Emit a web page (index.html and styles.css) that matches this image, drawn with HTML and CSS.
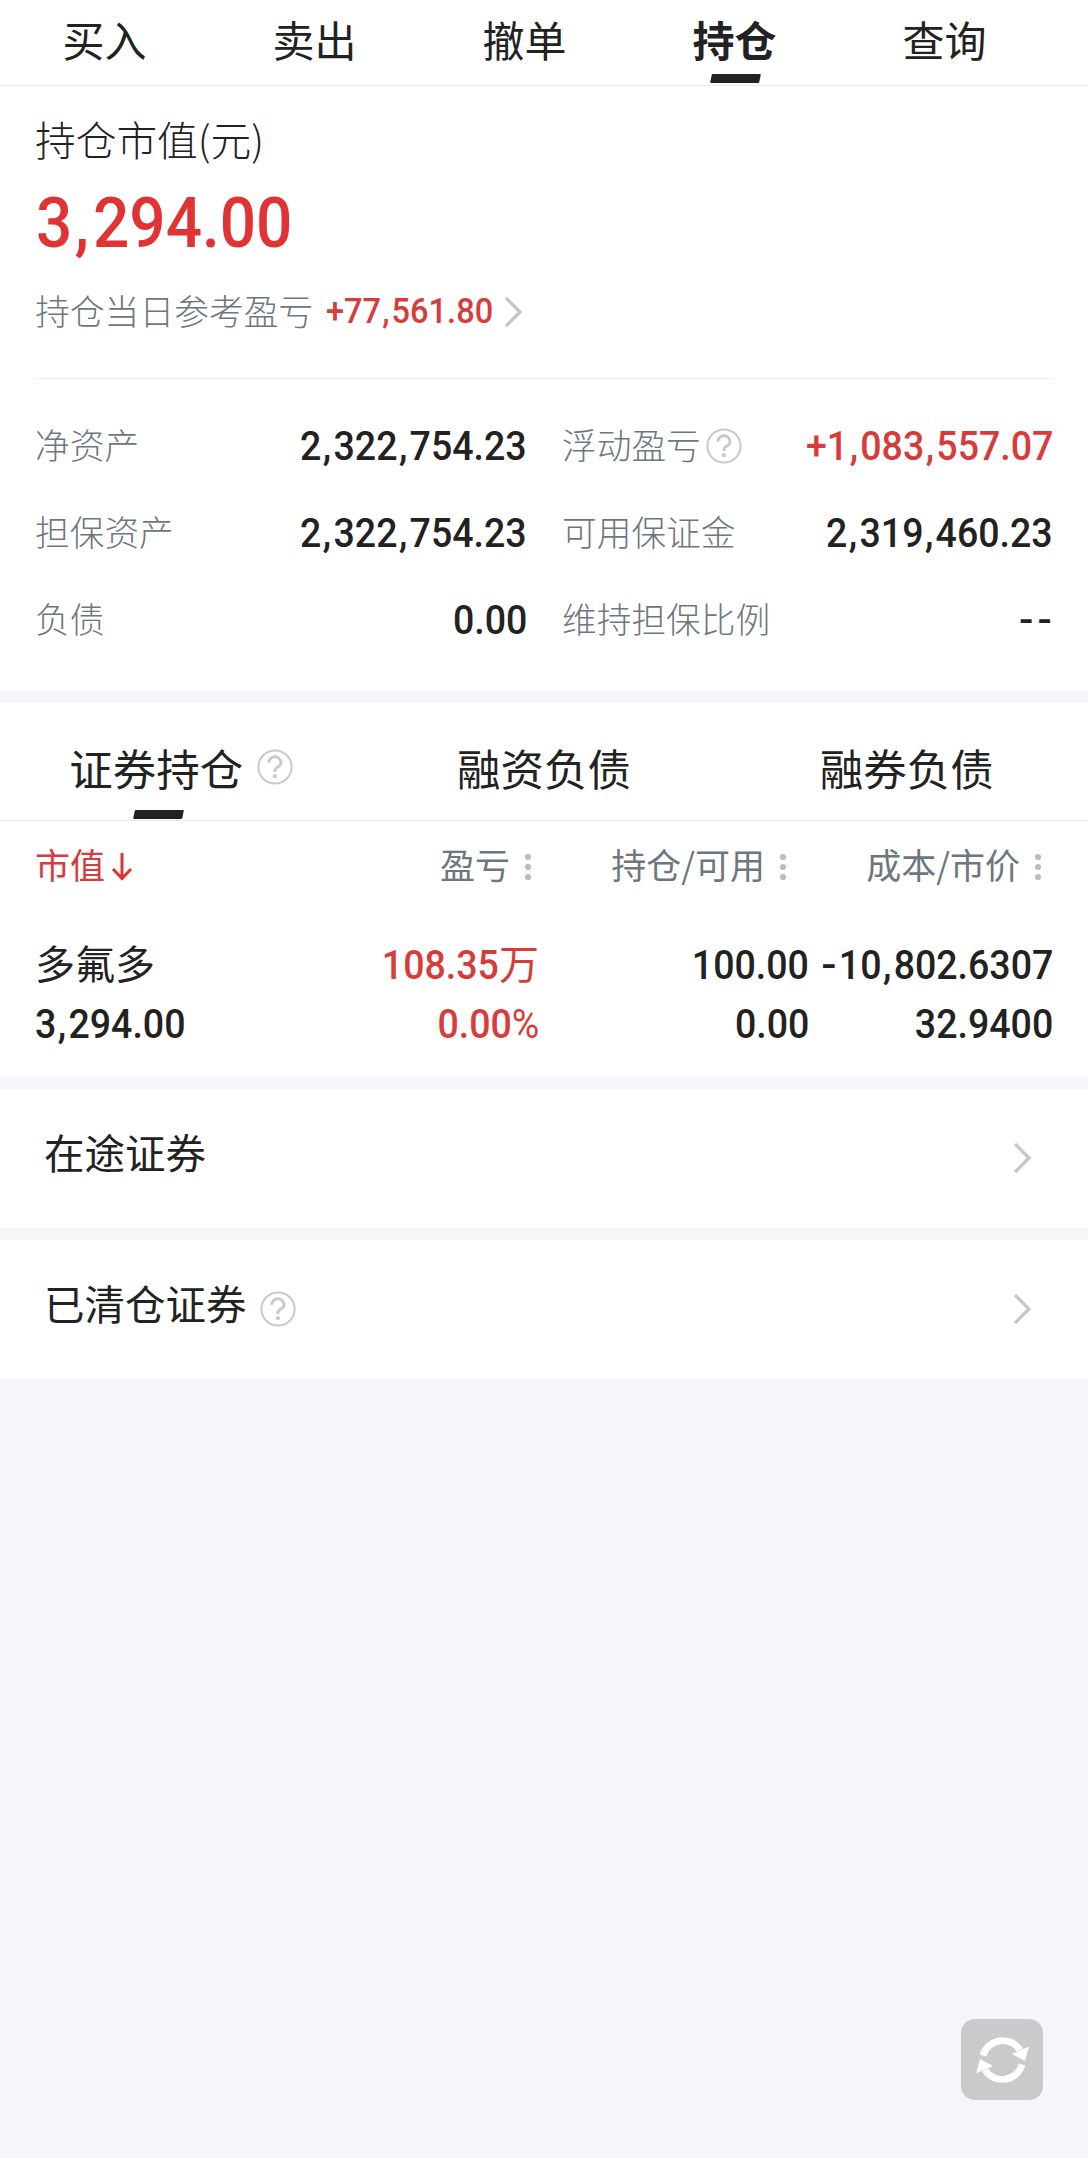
FILE: index.html
```html
<!DOCTYPE html>
<html lang="zh-CN">
<head>
    <meta charset="UTF-8">
    <title>持仓</title>
    <meta name="viewport" content="width=device-width, initial-scale=1.0">
    <link rel="stylesheet" href="styles.css">
</head>
<body>
    <svg class="sprite">
        <symbol id="help" viewBox="0 0 36 36">
            <circle cx="18" cy="18" r="16.6" fill="none" stroke="#c6cacf" stroke-width="2"/>
            <path d="M11.800 13.800a6.100 6.100 0 0 1 12.200 0c0 3-2.300 3.800-4.200 4.900-1.500.9-1.900 1.800-1.900 4.300" fill="none" stroke="#c6cacf" stroke-width="2.9"/>
            <circle cx="17.9" cy="27.200" r="2.100" fill="#c6cacf"/>
        </symbol>
        <symbol id="chevron" viewBox="0 0 20 32">
            <path d="M2 2l14 14L2 30" fill="none" stroke="#c3c7cc" stroke-width="3.200"/>
        </symbol>
        <symbol id="dots" viewBox="0 0 8 28">
            <circle cx="4" cy="4" r="3.1" fill="#b9bec3"/>
            <circle cx="4" cy="14" r="3.1" fill="#b9bec3"/>
            <circle cx="4" cy="24" r="3.1" fill="#b9bec3"/>
        </symbol>
    </svg>

    <nav class="tabs">
        <a class="tab">买入</a>
        <a class="tab">卖出</a>
        <a class="tab">撤单</a>
        <a class="tab active">持仓</a>
        <a class="tab">查询</a>
    </nav>

    <section class="resumo">
        <div class="titulo">持仓市值(元)</div>
        <div class="valor"><span class="num left">3<i>,</i>294.00</span></div>
        <div class="dia">
            <span>持仓当日参考盈亏</span>
            <span class="num left red">+77<i>,</i>561.80</span>
            <svg class="seta"><use href="#chevron"/></svg>
        </div>
        <div class="dados">
            <div class="dado"><span>净资产</span><span class="num">2<i>,</i>322<i>,</i>754.23</span></div>
            <div class="dado"><span>浮动盈亏</span><svg class="help"><use href="#help"/></svg><span class="num red">+1<i>,</i>083<i>,</i>557.07</span></div>
            <div class="dado"><span>担保资产</span><span class="num">2<i>,</i>322<i>,</i>754.23</span></div>
            <div class="dado"><span>可用保证金</span><span class="num">2<i>,</i>319<i>,</i>460.23</span></div>
            <div class="dado"><span>负债</span><span class="num">0.00</span></div>
            <div class="dado"><span>维持担保比例</span><span class="num traco">--</span></div>
        </div>
    </section>

    <section class="posicao">
        <div class="subtabs">
            <a class="subtab"><span class="active">证券持仓</span><svg class="help"><use href="#help"/></svg></a>
            <a class="subtab">融资负债</a>
            <a class="subtab">融券负债</a>
        </div>
        <div class="linha cabecalho">
            <div class="c1 red">市值<svg class="down" viewBox="0 0 22 30"><path d="M11 1v25M2 17l9 9.500 9-9.500" fill="none" stroke="#e03434" stroke-width="3"/></svg></div>
            <div class="c2">盈亏<svg class="dots"><use href="#dots"/></svg></div>
            <div class="c3">持仓/可用<svg class="dots"><use href="#dots"/></svg></div>
            <div class="c4">成本/市价<svg class="dots"><use href="#dots"/></svg></div>
        </div>
        <div class="linha">
            <div class="c1 nome">多氟多</div>
            <div class="c2 red"><span class="num">108.35</span>万</div>
            <div class="c3"><span class="num">100.00</span></div>
            <div class="c4"><span class="num"><span class="menos">-</span>10<i>,</i>802.6307</span></div>
        </div>
        <div class="linha">
            <div class="c1"><span class="num left">3<i>,</i>294.00</span></div>
            <div class="c2 red"><span class="num">0.00<span class="pct">%</span></span></div>
            <div class="c3"><span class="num">0.00</span></div>
            <div class="c4"><span class="num">32.9400</span></div>
        </div>
    </section>

    <a class="item">
        <span>在途证券</span>
        <svg class="seta"><use href="#chevron"/></svg>
    </a>
    <a class="item">
        <span>已清仓证券</span>
        <svg class="help"><use href="#help"/></svg>
        <svg class="seta"><use href="#chevron"/></svg>
    </a>

    <button class="atualizar">
        <svg viewBox="0 0 82 82">
            <g id="arco">
                <path d="M22 36.500A20.500 20.500 0 0 1 59 31" fill="none" stroke="#fff" stroke-width="6.800"/>
                <path d="M51 35l17-7.500-4 14.500z" fill="#fff"/>
            </g>
            <use href="#arco" transform="rotate(180 41.500 41)"/>
        </svg>
    </button>
</body>
</html>
```
FILE: styles.css
```css
* {
    box-sizing: border-box;
}

body {
    margin: 0;
    min-height: 2158px;
    background-color: #f4f6fa;
    color: #222;
    font-family: "Noto Sans CJK SC", sans-serif;
}

.sprite {
    display: none;
}

.red {
    color: #d63c3a;
}

.num {
    display: inline-block;
    font-family: Roboto, sans-serif;
    font-weight: 500;
    font-size: 41px;
    font-kerning: none;
    transform: scaleX(0.915);
    transform-origin: right center;
}

.num.left {
    transform-origin: left center;
}

.num i {
    margin: 0 0.06em 0 0.04em;
    font-style: normal;
}

.menos {
    display: inline-block;
    margin-right: 4px;
    transform: scaleX(1.2);
}

.tabs {
    display: flex;
    height: 86px;
    background-color: #fff;
    border-bottom: 1px solid #ebecec;
}

.tab {
    position: relative;
    width: 210px;
    padding-right: 1px;
    text-align: center;
    font-size: 42px;
    line-height: 77px;
}

.tab.active {
    font-weight: bold;
}

.active::after {
    content: "";
    position: absolute;
    left: 50%;
    top: 74px;
    width: 49px;
    height: 9px;
    margin-left: -24px;
    background-color: #222;
    border-radius: 1px;
    transform: skewX(-12deg);
}

.resumo {
    height: 605px;
    padding: 28px 35px 0;
    background-color: #fff;
}

.titulo {
    height: 52px;
    font-size: 40.7px;
    font-weight: 300;
    line-height: 50px;
}

.valor {
    height: 114px;
    color: #e03434;
    line-height: 114px;
}

.valor .num {
    margin-left: 1px;
    font-size: 71px;
    transform: scaleX(0.9);
}

.dia {
    display: flex;
    align-items: center;
    height: 63px;
    color: #6d7780;
    font-size: 34.8px;
    font-weight: 300;
    line-height: 52px;
}

.dia .num {
    margin-left: 13px;
    padding-top: 1px;
    font-size: 35px;
    transform: scaleX(0.93);
}

.dia .seta {
    margin-left: -2px;
}

.dia span:first-child,
.dado span:first-child {
    padding-bottom: 3px;
}

.seta {
    width: 20px;
    height: 32px;
}

.dados {
    display: grid;
    grid-template-columns: 492px 491px;
    column-gap: 35px;
    margin-top: 35px;
    padding-top: 23px;
    border-top: 1px solid #ebeeee;
}

.dado {
    display: flex;
    align-items: center;
    height: 87px;
    color: #6d7780;
    font-size: 34.7px;
    font-weight: 300;
}

.dado .num {
    margin-left: auto;
    color: #222;
}

.dado .num.red {
    color: #d63c3a;
}

.dado .traco {
    letter-spacing: 4px;
    margin-right: -3px;
    transform: scaleX(1.03);
}

.help {
    width: 36px;
    height: 36px;
}

.dado .help {
    margin-left: 5px;
}

.posicao {
    height: 374px;
    margin-top: 12px;
    background-color: #fff;
}

.subtabs {
    display: flex;
    height: 118px;
    border-bottom: 1px solid #e8ebeb;
}

.subtab {
    display: flex;
    flex: 1;
    align-items: center;
    justify-content: center;
    padding-top: 11px;
    font-size: 43.5px;
}

.subtab .active {
    position: relative;
}

.subtab .active::after {
    margin-left: -22px;
}

.subtab .help {
    margin-left: 14px;
}

.linha {
    display: flex;
    padding: 0 35px;
    height: 59px;
    font-size: 40px;
    line-height: 59px;
    text-align: right;
}

.linha .c1 {
    width: 200px;
    text-align: left;
}

.linha .c2 {
    width: 304px;
}

.linha .c3 {
    width: 270px;
}

/* invade um pouco a coluna anterior para caber o custo */
.linha .c4 {
    width: 274px;
    margin-left: -30px;
    white-space: nowrap;
}

.cabecalho {
    height: 112px;
    color: #6d7780;
    font-size: 35px;
    line-height: 86px;
}

/* o cabeçalho não alinha com os valores */
.cabecalho .c2 {
    width: 297px;
}

.cabecalho .c3 {
    width: 255px;
}

.cabecalho .c4 {
    width: 285px;
}

.dots {
    width: 8px;
    height: 28px;
    margin-left: 14px;
    vertical-align: -2px;
}

.down {
    width: 22px;
    height: 30px;
    margin-left: 6px;
    vertical-align: -3px;
}

.pct {
    font-weight: 400;
}

.item {
    display: flex;
    align-items: center;
    height: 139px;
    margin-top: 12px;
    padding: 0 55px 2px 44px;
    background-color: #fff;
    font-size: 40.5px;
}

.item span {
    padding-bottom: 12px;
}

.item .help {
    margin-left: 13px;
}

.item .seta {
    margin-left: auto;
}

.atualizar {
    position: fixed;
    right: 45px;
    top: 2019px;
    width: 82px;
    height: 81px;
    padding: 0;
    border: none;
    border-radius: 14px;
    background-color: #c9cacc;
}
```
